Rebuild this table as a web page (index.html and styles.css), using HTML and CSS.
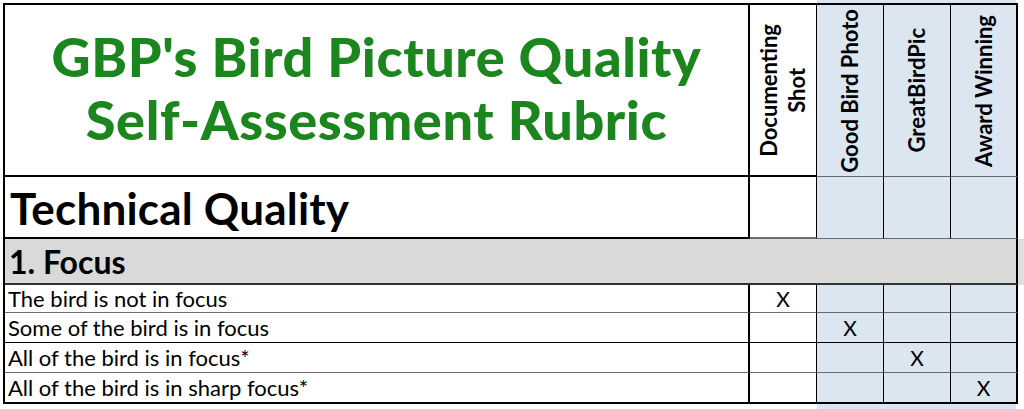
FILE: index.html
```html
<!DOCTYPE html>
<html lang="en">
<head>
<meta charset="utf-8">
<title>GBP's Bird Picture Quality Self-Assessment Rubric</title>
<link rel="stylesheet" href="styles.css">
</head>
<body>
<div class="sheet">
  <div class="rubric">
    <div class="cell title-cell thick-r thick-b">
      <div class="title">GBP's Bird Picture Quality</div>
      <div class="title">Self-Assessment Rubric</div>
    </div>
    <div class="cell head thick-b"><span class="vtext">Documenting<br>Shot</span></div>
    <div class="cell head blue gray-b"><span class="vtext">Good Bird Photo</span></div>
    <div class="cell head blue gray-b"><span class="vtext">GreatBirdPic</span></div>
    <div class="cell head blue gray-b thick-r"><span class="vtext">Award Winning</span></div>

    <div class="cell section thick-r thick-b">Technical Quality</div>
    <div class="cell thick-b gray-b"></div>
    <div class="cell blue gray-b"></div>
    <div class="cell blue gray-b"></div>
    <div class="cell blue gray-b thick-r"></div>

    <div class="cell focus thick-r thick-b">1. Focus</div>

    <div class="cell label thick-r gray-b">The bird is not in focus</div>
    <div class="cell mark gray-b">X</div>
    <div class="cell blue gray-b"></div>
    <div class="cell blue gray-b"></div>
    <div class="cell blue gray-b thick-r"></div>

    <div class="cell label thick-r">Some of the bird is in focus</div>
    <div class="cell"></div>
    <div class="cell mark blue">X</div>
    <div class="cell blue"></div>
    <div class="cell blue thick-r"></div>

    <div class="cell label thick-r gray-b">All of the bird is in focus*</div>
    <div class="cell gray-b"></div>
    <div class="cell blue gray-b"></div>
    <div class="cell mark blue gray-b">X</div>
    <div class="cell blue gray-b thick-r"></div>

    <div class="cell label thick-r thick-b">All of the bird is in sharp focus*</div>
    <div class="cell thick-b"></div>
    <div class="cell blue thick-b"></div>
    <div class="cell blue thick-b"></div>
    <div class="cell mark blue thick-b thick-r">X</div>
  </div>
</div>
</body>
</html>
```
FILE: styles.css
```css
html, body {
  margin: 0;
  padding: 0;
}

body {
  width: 1024px;
  height: 409px;
  overflow: hidden;
  background: linear-gradient(90deg, #ffffff 817px, #dce6f1 817px, #dce6f1 1016px, #ffffff 1016px);
  font-family: "Lato", "Open Sans", sans-serif;
  color: #000;
}

.sheet {
  padding: 3px 0 0 3px;
}

.rubric {
  display: grid;
  grid-template-columns: 745px 67px 67px 67px 67px;
  grid-template-rows: 172px 62px 46px 28px 30px 30px 31px;
  width: 1013px;
  border-left: 2px solid #000;
  border-top: 2px solid #000;
  background: #fff;
}

.cell {
  box-sizing: border-box;
  border-right: 1px solid #000;
  border-bottom: 1px solid #000;
  background: #fff;
  min-width: 0;
}

.cell.blue {
  background: #dce6f1;
}

.cell.gray-b {
  border-bottom-color: #6b6b6b;
}

.cell.thick-r {
  border-right-width: 2px;
}

.cell.thick-b {
  border-bottom-width: 2px;
}

.title-cell {
  display: flex;
  flex-direction: column;
  align-items: center;
  justify-content: center;
  padding-bottom: 4px;
}

.title {
  color: #1b861d;
  font-family: "Lato", sans-serif;
  font-weight: 900;
  font-size: 54px;
  line-height: 63px;
  letter-spacing: 0.6px;
  white-space: nowrap;
}

.head {
  display: flex;
  align-items: center;
  justify-content: center;
}

.vtext {
  writing-mode: vertical-rl;
  transform: rotate(180deg);
  font-weight: 700;
  font-size: 22px;
  line-height: 28px;
  text-align: center;
  white-space: nowrap;
}

.section {
  display: flex;
  align-items: center;
  padding-left: 5px;
  padding-top: 2px;
  font-weight: 700;
  font-size: 44px;
  letter-spacing: 0.2px;
}

.focus {
  grid-column: 1 / span 5;
  display: flex;
  align-items: center;
  padding-left: 4px;
  background: #d9d9d9;
  font-weight: 700;
  font-size: 32px;
  box-shadow: 6px 0 0 #dedede;
  border-bottom-color: #333;
}

.label {
  display: flex;
  align-items: center;
  padding-left: 3px;
  font-size: 22px;
  white-space: nowrap;
}

.mark {
  display: flex;
  align-items: center;
  justify-content: center;
  font-size: 21px;
}
```
